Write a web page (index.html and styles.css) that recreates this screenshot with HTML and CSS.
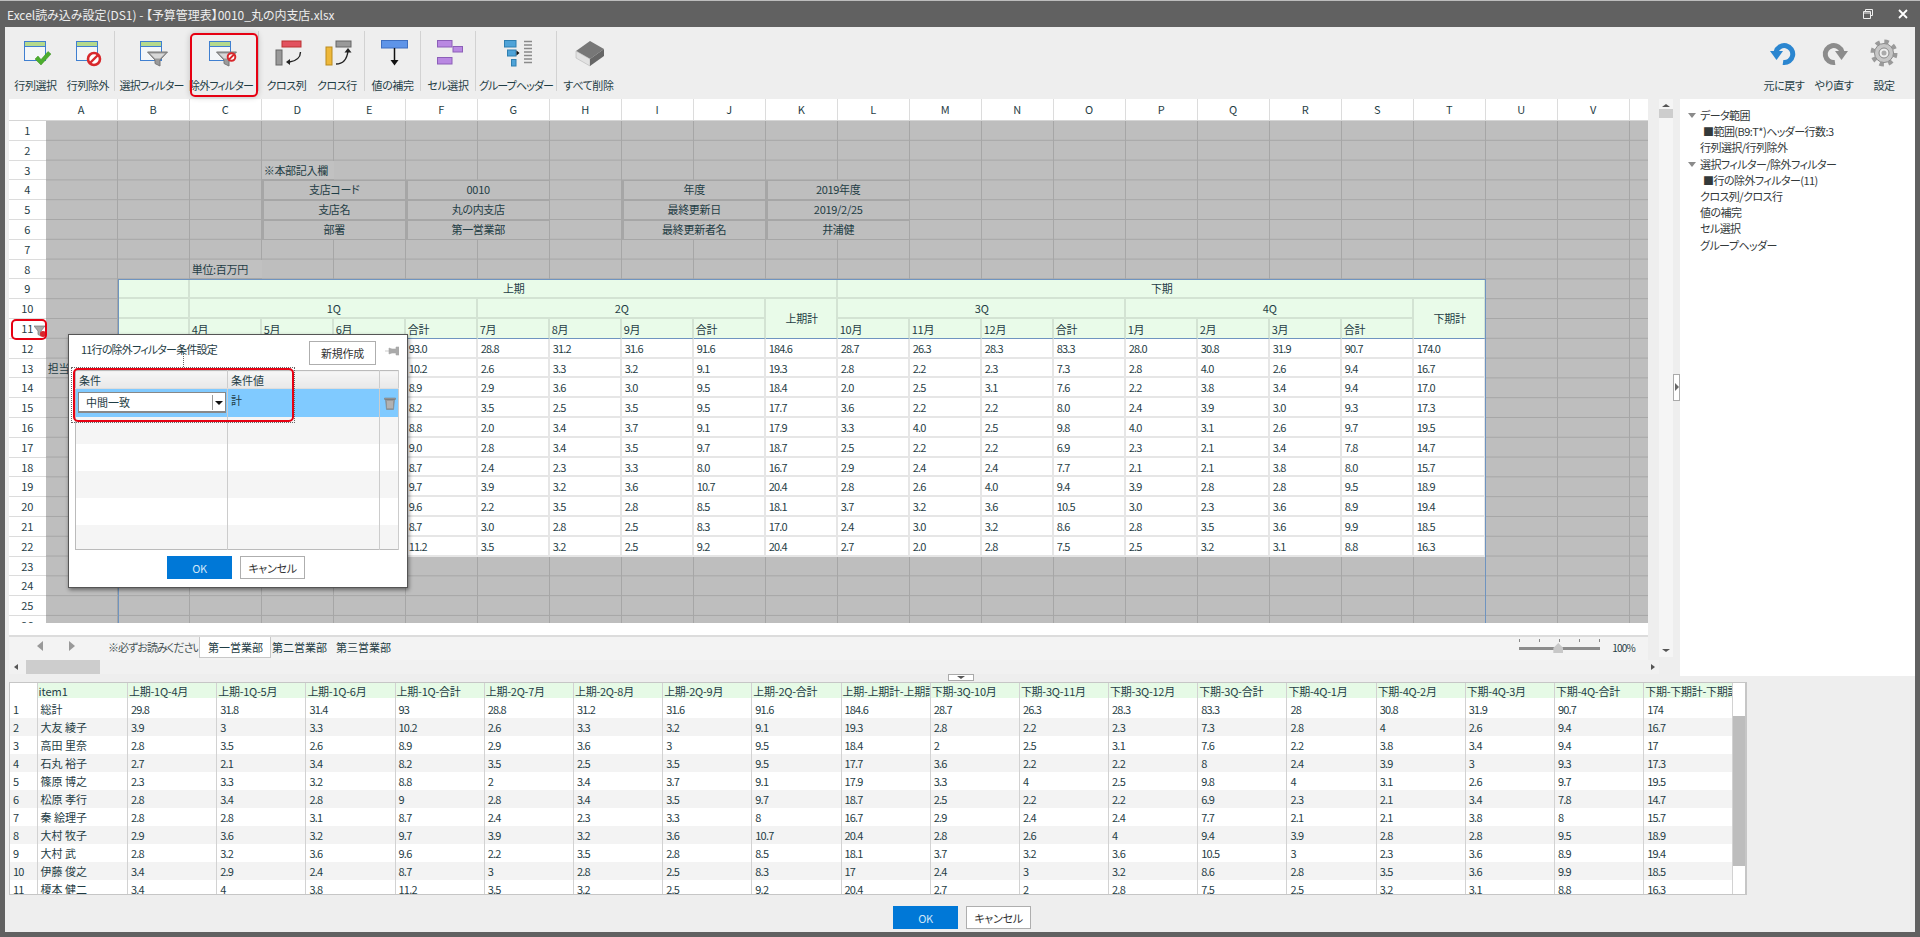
FILE: index.html
```html
<!DOCTYPE html>
<html lang="ja">
<head>
<meta charset="utf-8">
<title>Excel読み込み設定</title>
<link rel="stylesheet" href="styles.css">
</head>
<body>
<svg class="defs" width="0" height="0">
  <symbol id="sh" viewBox="0 0 32 28"><rect x="4.500" y="2.500" width="21" height="19" fill="#f4f6f8" stroke="#3f7fd0"/><rect x="5" y="3" width="20" height="4" fill="#b5d98c"/><path d="M5 7.500h20" stroke="#3f7fd0"/></symbol>
  <symbol id="fn" viewBox="0 0 32 28"><path d="M11.500 13h20l-7.500 8v6l-5-2.500v-3.500z" fill="#9a9a9a" stroke="#777"/><path d="M14 14.500h15l-5 5h-5z" fill="#d8d8d8"/></symbol>
</svg>
<div class="app">
  <header class="titlebar">
    <span class="title">Excel読み込み設定(DS1) - 【予算管理表】0010_丸の内支店.xlsx</span>
    <svg class="win-restore" width="10" height="10" viewBox="0 0 10 10"><path d="M2.500 2.500v-2h7v6h-2M.5 2.500h7v7h-7z M.5 4h7" fill="none" stroke="#eee"/></svg>
    <svg class="win-close" width="10" height="10" viewBox="0 0 10 10"><path d="M1 1l8 8M9 1l-8 8" stroke="#fff" stroke-width="1.800"/></svg>
  </header>

  <nav class="toolbar">
    <div class="tb w53"><svg width="32" height="28"><use href="#sh"/><path d="M15 20l3-3 3 3.500 7-8 3 2.500-10 11z" fill="#4cae2e" stroke="#3c8f22" stroke-width=".5"/></svg><span>行列選択</span></div>
    <div class="tb w52"><svg width="32" height="28"><use href="#sh"/><circle cx="22" cy="20" r="6" fill="#fff" stroke="#d8282c" stroke-width="2.600"/><path d="M18 24l8-8" stroke="#d8282c" stroke-width="2.400"/></svg><span>行列除外</span></div>
    <i class="sep"></i>
    <div class="tb w73"><svg width="32" height="28"><use href="#sh"/><use href="#fn"/></svg><span class="kana">選択フィルター</span></div>
    <div class="tb w66 mr4"><svg width="32" height="28"><use href="#sh"/><use href="#fn"/><circle cx="26.500" cy="18" r="3.800" fill="#fff" stroke="#d8282c" stroke-width="2"/><path d="M24 20.500l5-5" stroke="#d8282c" stroke-width="1.800"/></svg><span class="kana">除外フィルター</span></div>
    <i class="sep"></i>
    <div class="tb w55"><svg width="32" height="28"><rect x="11" y="2" width="19" height="6" fill="#e2525f" stroke="#b33"/><rect x="5" y="11" width="6" height="15" fill="#999" stroke="#666"/><path d="M29.500 13c0 5-4 9-11 10" fill="none" stroke="#222" stroke-width="1.400"/><path d="M15 23l4-3v6z" fill="#222"/></svg><span>クロス列</span></div>
    <div class="tb w46 mr4"><svg width="32" height="28"><rect x="15" y="2" width="15" height="6" fill="#999" stroke="#666"/><rect x="5" y="8" width="6" height="18" fill="#eeb83a" stroke="#b98a1c"/><path d="M15 25c7 0 11-5 12-13" fill="none" stroke="#222" stroke-width="1.400"/><path d="M27 9l3.500 4.500h-7z" fill="#222"/></svg><span>クロス行</span></div>
    <i class="sep"></i>
    <div class="tb w55"><svg width="32" height="28"><rect x="4.500" y="1.500" width="26" height="7.500" fill="#5e94e8" stroke="#3f6fc0"/><path d="M17.500 9v14" stroke="#111" stroke-width="1.500"/><path d="M13.500 21h8l-4 5.500z" fill="#111"/></svg><span>値の補完</span></div>
    <i class="sep"></i>
    <div class="tb w54"><svg width="32" height="28"><g fill="#b988e2" stroke="#8c5fb8"><rect x="5.500" y="1.500" width="14.500" height="6.500"/><rect x="21" y="7.500" width="9.500" height="5.500"/><rect x="5.500" y="18.500" width="14.500" height="6.500"/></g></svg><span>セル選択</span></div>
    <i class="sep"></i>
    <div class="tb w80"><svg width="32" height="28"><g fill="#4fa3d8" stroke="#2f7fb0"><rect x="4.500" y="1.500" width="11.500" height="6.500"/><rect x="7.500" y="11" width="8.500" height="6"/><rect x="11.500" y="20.500" width="4.500" height="6.500"/></g><path d="M16.500 11.500l3 2.500-3 2.500z" fill="#111"/><path d="M24 2.500h8M24 6h8M24 9.500h8M24 13h8M24 16.500h8M24 20h8M24 23.500h8" stroke="#8a8a8a" stroke-width="1.500"/></svg><span class="kana">グループヘッダー</span></div>
    <i class="sep"></i>
    <div class="tb w63"><svg width="32" height="28"><path d="M3 12L17 2l14 8-14 10z" fill="#777"/><path d="M3 12l14 8v7L3 19z" fill="#e2e2e2" stroke="#aaa" stroke-width=".5"/><path d="M17 20l14-10v7L17 27z" fill="#666"/></svg><span>すべて削除</span></div>
    <div class="tb w50 push"><svg width="28" height="28"><path d="M13 23.500A8.500 8.500 0 1 0 6 13" fill="none" stroke="#2b86d0" stroke-width="5"/><path d="M0 12h13l-6.500 9z" fill="#2b86d0"/></svg><span>元に戻す</span></div>
    <div class="tb w50"><svg width="28" height="28"><path d="M15 23.500A8.500 8.500 0 1 1 22 13" fill="none" stroke="#8c8c8c" stroke-width="5"/><path d="M28 12H15l6.500 9z" fill="#8c8c8c"/></svg><span>やり直す</span></div>
    <div class="tb w50"><svg width="28" height="28" viewBox="0 0 28 28"><circle cx="14" cy="14" r="11.500" fill="none" stroke="#9a9a9a" stroke-width="4" stroke-dasharray="4.500 4.530"/><circle cx="14" cy="14" r="9.500" fill="#c6c6c6" stroke="#8a8a8a"/><circle cx="14" cy="14" r="5" fill="#eee" stroke="#8a8a8a"/><circle cx="14" cy="14" r="2.500" fill="#aaa"/></svg><span>設定</span></div>
  </nav>

  <main class="main">
    <div class="sheet-col">
      <section class="sheet">
        <div class="col-heads">
          <span class="corner"></span>
          <span>A</span><span>B</span><span>C</span><span>D</span><span>E</span><span>F</span><span>G</span><span>H</span><span>I</span><span>J</span><span>K</span><span>L</span><span>M</span><span>N</span><span>O</span><span>P</span><span>Q</span><span>R</span><span>S</span><span>T</span><span>U</span><span>V</span><span></span>
        </div>
        <div class="sheet-body">
          <div class="row-heads">
            <span>1</span><span>2</span><span>3</span><span>4</span><span>5</span><span>6</span><span>7</span><span>8</span><span>9</span><span>10</span><span>11</span><span>12</span><span>13</span><span>14</span><span>15</span><span>16</span><span>17</span><span>18</span><span>19</span><span>20</span><span>21</span><span>22</span><span>23</span><span>24</span><span>25</span><span>26</span>
          </div>
          <div class="cells">
            <span class="cell plain r3 c4">※本部記入欄</span>
            <span class="cell r4 c4 s2">支店コード</span><span class="cell r4 c6 s2">0010</span><span class="cell r4 c9 s2">年度</span><span class="cell r4 c11 s2">2019年度</span>
            <span class="cell r5 c4 s2">支店名</span><span class="cell r5 c6 s2">丸の内支店</span><span class="cell r5 c9 s2">最終更新日</span><span class="cell r5 c11 s2">2019/2/25</span>
            <span class="cell r6 c4 s2">部署</span><span class="cell r6 c6 s2">第一営業部</span><span class="cell r6 c9 s2">最終更新者名</span><span class="cell r6 c11 s2">井浦健</span>
            <span class="cell plain r8 c3">単位:百万円</span>
            <span class="cell plain r13 c1">担当者</span>
            <div class="t">
              <span class="g"></span><span class="g ce s9">上期</span><span class="g ce s9">下期</span>
              <span class="g"></span><span class="g ce s4">1Q</span><span class="g ce s4">2Q</span><span class="g ce rs2">上期計</span><span class="g ce s4">3Q</span><span class="g ce s4">4Q</span><span class="g ce rs2">下期計</span>
              <span class="g hb"></span><span class="g hb">4月</span><span class="g hb">5月</span><span class="g hb">6月</span><span class="g hb">合計</span><span class="g hb">7月</span><span class="g hb">8月</span><span class="g hb">9月</span><span class="g hb">合計</span><span class="g hb">10月</span><span class="g hb">11月</span><span class="g hb">12月</span><span class="g hb">合計</span><span class="g hb">1月</span><span class="g hb">2月</span><span class="g hb">3月</span><span class="g hb">合計</span>
              <span></span><span>29.8</span><span>31.8</span><span>31.4</span><span>93.0</span><span>28.8</span><span>31.2</span><span>31.6</span><span>91.6</span><span>184.6</span><span>28.7</span><span>26.3</span><span>28.3</span><span>83.3</span><span>28.0</span><span>30.8</span><span>31.9</span><span>90.7</span><span>174.0</span>
              <span></span><span>3.9</span><span>3.0</span><span>3.3</span><span>10.2</span><span>2.6</span><span>3.3</span><span>3.2</span><span>9.1</span><span>19.3</span><span>2.8</span><span>2.2</span><span>2.3</span><span>7.3</span><span>2.8</span><span>4.0</span><span>2.6</span><span>9.4</span><span>16.7</span>
              <span></span><span>2.8</span><span>3.5</span><span>2.6</span><span>8.9</span><span>2.9</span><span>3.6</span><span>3.0</span><span>9.5</span><span>18.4</span><span>2.0</span><span>2.5</span><span>3.1</span><span>7.6</span><span>2.2</span><span>3.8</span><span>3.4</span><span>9.4</span><span>17.0</span>
              <span></span><span>2.7</span><span>2.1</span><span>3.4</span><span>8.2</span><span>3.5</span><span>2.5</span><span>3.5</span><span>9.5</span><span>17.7</span><span>3.6</span><span>2.2</span><span>2.2</span><span>8.0</span><span>2.4</span><span>3.9</span><span>3.0</span><span>9.3</span><span>17.3</span>
              <span></span><span>2.3</span><span>3.3</span><span>3.2</span><span>8.8</span><span>2.0</span><span>3.4</span><span>3.7</span><span>9.1</span><span>17.9</span><span>3.3</span><span>4.0</span><span>2.5</span><span>9.8</span><span>4.0</span><span>3.1</span><span>2.6</span><span>9.7</span><span>19.5</span>
              <span></span><span>2.8</span><span>3.4</span><span>2.8</span><span>9.0</span><span>2.8</span><span>3.4</span><span>3.5</span><span>9.7</span><span>18.7</span><span>2.5</span><span>2.2</span><span>2.2</span><span>6.9</span><span>2.3</span><span>2.1</span><span>3.4</span><span>7.8</span><span>14.7</span>
              <span></span><span>2.8</span><span>2.8</span><span>3.1</span><span>8.7</span><span>2.4</span><span>2.3</span><span>3.3</span><span>8.0</span><span>16.7</span><span>2.9</span><span>2.4</span><span>2.4</span><span>7.7</span><span>2.1</span><span>2.1</span><span>3.8</span><span>8.0</span><span>15.7</span>
              <span></span><span>2.9</span><span>3.6</span><span>3.2</span><span>9.7</span><span>3.9</span><span>3.2</span><span>3.6</span><span>10.7</span><span>20.4</span><span>2.8</span><span>2.6</span><span>4.0</span><span>9.4</span><span>3.9</span><span>2.8</span><span>2.8</span><span>9.5</span><span>18.9</span>
              <span></span><span>2.8</span><span>3.2</span><span>3.6</span><span>9.6</span><span>2.2</span><span>3.5</span><span>2.8</span><span>8.5</span><span>18.1</span><span>3.7</span><span>3.2</span><span>3.6</span><span>10.5</span><span>3.0</span><span>2.3</span><span>3.6</span><span>8.9</span><span>19.4</span>
              <span></span><span>3.4</span><span>2.9</span><span>2.4</span><span>8.7</span><span>3.0</span><span>2.8</span><span>2.5</span><span>8.3</span><span>17.0</span><span>2.4</span><span>3.0</span><span>3.2</span><span>8.6</span><span>2.8</span><span>3.5</span><span>3.6</span><span>9.9</span><span>18.5</span>
              <span></span><span>3.4</span><span>4.0</span><span>3.8</span><span>11.2</span><span>3.5</span><span>3.2</span><span>2.5</span><span>9.2</span><span>20.4</span><span>2.7</span><span>2.0</span><span>2.8</span><span>7.5</span><span>2.5</span><span>3.2</span><span>3.1</span><span>8.8</span><span>16.3</span>
            </div>
            <div class="range"></div>
          </div>
        </div>
      </section>
      <div class="tabs">
        <span class="tab-arrow left"></span><span class="tab-arrow right"></span>
        <span class="tab first">※必ずお読みください</span><span class="tab active">第一営業部</span><span class="tab">第二営業部</span><span class="tab">第三営業部</span>
        <div class="zoom">
          <div class="slider"><i class="ticks"></i><i class="track"></i><i class="thumb"></i></div>
          <span>100%</span>
        </div>
      </div>
      <div class="hscroll"><span class="arr-l"></span><span class="hthumb"></span><span class="arr-r"></span></div>
    </div>
    <div class="vscroll"><span class="arr-u"></span><span class="vthumb"></span><span class="arr-d"></span></div>
    <div class="split"><span class="split-handle"></span></div>
    <aside class="tree">
      <div class="node top">データ範囲</div>
      <div class="node sub">■範囲(B9:T*)ヘッダー行数:3</div>
      <div class="node">行列選択/行列除外</div>
      <div class="node top">選択フィルター/除外フィルター</div>
      <div class="node sub">■行の除外フィルター(11)</div>
      <div class="node">クロス列/クロス行</div>
      <div class="node">値の補完</div>
      <div class="node">セル選択</div>
      <div class="node">グループヘッダー</div>
    </aside>
  </main>

  <section class="lower">
    <span class="lower-handle"></span>
    <div class="dg">
      <table class="dt">
        <thead><tr><th></th><th>item1</th><th>上期-1Q-4月</th><th>上期-1Q-5月</th><th>上期-1Q-6月</th><th>上期-1Q-合計</th><th>上期-2Q-7月</th><th>上期-2Q-8月</th><th>上期-2Q-9月</th><th>上期-2Q-合計</th><th>上期-上期計-上期計</th><th>下期-3Q-10月</th><th>下期-3Q-11月</th><th>下期-3Q-12月</th><th>下期-3Q-合計</th><th>下期-4Q-1月</th><th>下期-4Q-2月</th><th>下期-4Q-3月</th><th>下期-4Q-合計</th><th>下期-下期計-下期計</th></tr></thead>
        <tbody>
          <tr><td>1<td>総計<td>29.8<td>31.8<td>31.4<td>93<td>28.8<td>31.2<td>31.6<td>91.6<td>184.6<td>28.7<td>26.3<td>28.3<td>83.3<td>28<td>30.8<td>31.9<td>90.7<td>174</tr>
          <tr><td>2<td>大友 綾子<td>3.9<td>3<td>3.3<td>10.2<td>2.6<td>3.3<td>3.2<td>9.1<td>19.3<td>2.8<td>2.2<td>2.3<td>7.3<td>2.8<td>4<td>2.6<td>9.4<td>16.7</tr>
          <tr><td>3<td>高田 里奈<td>2.8<td>3.5<td>2.6<td>8.9<td>2.9<td>3.6<td>3<td>9.5<td>18.4<td>2<td>2.5<td>3.1<td>7.6<td>2.2<td>3.8<td>3.4<td>9.4<td>17</tr>
          <tr><td>4<td>石丸 裕子<td>2.7<td>2.1<td>3.4<td>8.2<td>3.5<td>2.5<td>3.5<td>9.5<td>17.7<td>3.6<td>2.2<td>2.2<td>8<td>2.4<td>3.9<td>3<td>9.3<td>17.3</tr>
          <tr><td>5<td>篠原 博之<td>2.3<td>3.3<td>3.2<td>8.8<td>2<td>3.4<td>3.7<td>9.1<td>17.9<td>3.3<td>4<td>2.5<td>9.8<td>4<td>3.1<td>2.6<td>9.7<td>19.5</tr>
          <tr><td>6<td>松原 孝行<td>2.8<td>3.4<td>2.8<td>9<td>2.8<td>3.4<td>3.5<td>9.7<td>18.7<td>2.5<td>2.2<td>2.2<td>6.9<td>2.3<td>2.1<td>3.4<td>7.8<td>14.7</tr>
          <tr><td>7<td>秦 絵理子<td>2.8<td>2.8<td>3.1<td>8.7<td>2.4<td>2.3<td>3.3<td>8<td>16.7<td>2.9<td>2.4<td>2.4<td>7.7<td>2.1<td>2.1<td>3.8<td>8<td>15.7</tr>
          <tr><td>8<td>大村 牧子<td>2.9<td>3.6<td>3.2<td>9.7<td>3.9<td>3.2<td>3.6<td>10.7<td>20.4<td>2.8<td>2.6<td>4<td>9.4<td>3.9<td>2.8<td>2.8<td>9.5<td>18.9</tr>
          <tr><td>9<td>大村 武<td>2.8<td>3.2<td>3.6<td>9.6<td>2.2<td>3.5<td>2.8<td>8.5<td>18.1<td>3.7<td>3.2<td>3.6<td>10.5<td>3<td>2.3<td>3.6<td>8.9<td>19.4</tr>
          <tr><td>10<td>伊藤 俊之<td>3.4<td>2.9<td>2.4<td>8.7<td>3<td>2.8<td>2.5<td>8.3<td>17<td>2.4<td>3<td>3.2<td>8.6<td>2.8<td>3.5<td>3.6<td>9.9<td>18.5</tr>
          <tr><td>11<td>榎本 健二<td>3.4<td>4<td>3.8<td>11.2<td>3.5<td>3.2<td>2.5<td>9.2<td>20.4<td>2.7<td>2<td>2.8<td>7.5<td>2.5<td>3.2<td>3.1<td>8.8<td>16.3</tr>
        </tbody>
      </table>
      <div class="dg-scroll"><span class="dg-thumb"></span></div>
    </div>
    <div class="actions">
      <button class="btn primary">OK</button>
      <button class="btn">キャンセル</button>
    </div>
  </section>

  <div class="mark mark-tool"></div>
  <div class="mark mark-row"></div>
  <svg class="row-filter" width="13" height="13" viewBox="0 0 13 13"><path d="M0 1h11L7 6v5L4 9.500V6z" fill="#aaa" stroke="#777" stroke-width=".7"/><circle cx="9" cy="9" r="3" fill="#d8282c"/></svg>

  <div class="dialog">
    <div class="dlg-head">
      <span class="dlg-title">11行の除外フィルター条件設定</span>
      <button class="btn dlg-new">新規作成</button>
      <svg class="pin" width="14" height="10" viewBox="0 0 14 10"><path d="M0 5h4M4 2l3 1h4V1h3v8h-3V7H7L4 8z" fill="#aaa" stroke="#aaa" stroke-width=".6"/></svg>
    </div>
    <table class="ct">
      <thead><tr><th>条件</th><th>条件値</th><th></th></tr></thead>
      <tbody>
        <tr class="sel">
          <td><div class="combo"><span>中間一致</span><i class="combo-btn"></i></div></td>
          <td>計</td>
          <td><svg class="trash" width="12" height="13" viewBox="0 0 12 13"><path d="M.5 1h11v1.500h-11zM1.500 2.500h9l-1 10h-7z" fill="#9a9a9a" stroke="#777" stroke-width=".5"/><path d="M4 4v7M6 4v7M8 4v7" stroke="#c8c8c8"/></svg></td>
        </tr>
        <tr><td></td><td></td><td></td></tr>
        <tr><td></td><td></td><td></td></tr>
        <tr><td></td><td></td><td></td></tr>
        <tr><td></td><td></td><td></td></tr>
        <tr class="last"><td></td><td></td><td></td></tr>
      </tbody>
    </table>
    <div class="dlg-actions">
      <button class="btn primary">OK</button>
      <button class="btn">キャンセル</button>
    </div>
    <div class="dots"></div>
    <div class="dots-line"></div>
    <div class="mark mark-cond"></div>
  </div>
</div>
</body>
</html>
```

FILE: styles.css
```css
* { box-sizing: border-box; }
html, body { margin: 0; height: 100%; overflow: hidden; }
body {
  font-family: "Noto Sans CJK JP", "Noto Sans", sans-serif;
  font-feature-settings: "palt";
  font-size: 11px;
  color: #1f3d45;
  background: #616161;
}
.defs { position: absolute; }
.app {
  position: relative;
  width: 1920px;
  height: 937px;
  padding: 1px 5px 5px;
  background: #616161;
  display: flex;
  flex-direction: column;
  box-shadow: inset 0 1px 0 #bdbdbd;
}

/* title bar */
.titlebar { height: 26px; display: flex; align-items: center; color: #eee; padding-left: 2px; flex: none; }
.title { font-size: 12px; letter-spacing: -.03px; }
.win-restore { margin-left: auto; margin-right: 25px; }
.win-close { margin-right: 7px; }

/* toolbar */
.toolbar { height: 72px; flex: none; background: #eee; display: flex; padding: 0 6px 0 4px; }
.tb { height: 72px; display: flex; flex-direction: column; align-items: center; padding-top: 12px; flex: none; white-space: nowrap; font-size: 11px; letter-spacing: -.4px; }
.tb svg { flex: none; display: block; }
.tb span { margin-top: 10px; line-height: 16px; }
.tb .kana { letter-spacing: -.9px; }
.w46 { width: 46px; } .w50 { width: 50px; } .w52 { width: 52px; } .w53 { width: 53px; } .w54 { width: 54px; }
.w55 { width: 55px; } .w63 { width: 63px; } .w66 { width: 66px; } .w73 { width: 73px; } .w80 { width: 80px; }
.mr4 { margin-right: 4px; }
.push { margin-left: auto; }
.sep { width: 1px; height: 60px; margin: 4px 0 0; background: #d2d2d2; flex: none; }

/* main area */
.main { height: 577px; flex: none; display: flex; background: #eee; padding-left: 4px; }
.sheet-col { width: 1650px; flex: none; display: flex; flex-direction: column; }
.sheet { width: 1639px; height: 536px; background: #fff; overflow: hidden; flex: none; }
.col-heads { height: 22px; display: flex; border-bottom: 1px solid #d5d5d5; }
.col-heads span { width: 72px; flex: none; text-align: center; line-height: 21px; border-right: 1px solid #dcdcdc; }
.col-heads .corner { width: 36.700px; border-right: 0; }
.sheet-body { display: flex; height: 502px; overflow: hidden; }
.row-heads { width: 36.700px; flex: none; display: flex; flex-direction: column; }
.row-heads span { height: 19.800px; flex: none; text-align: center; line-height: 19px; border-bottom: 1px solid #dcdcdc; }
.cells {
  position: relative;
  flex: none;
  width: 1656px;
  display: grid;
  grid-template-columns: repeat(23, 72px);
  grid-auto-rows: 19.800px;
  background-color: #bebebe;
  background-image: linear-gradient(to left, #a6a6a6 1px, transparent 1px), linear-gradient(to top, #a6a6a6 1px, transparent 1px);
  background-size: 72px 19.800px;
}
.cell { line-height: 17px; text-align: center; border: 1px solid #a6a6a6; border-left-width: 2px; background: #bebebe; white-space: nowrap; letter-spacing: -.3px; }
.cell.plain { border: 0; background: #c1c1c1; text-align: left; padding-left: 2px; line-height: 19px; border-bottom: 1px solid #a6a6a6; letter-spacing: -.3px; }
.r3 { grid-row: 3; } .r4 { grid-row: 4; } .r5 { grid-row: 5; } .r6 { grid-row: 6; } .r8 { grid-row: 8; } .r13 { grid-row: 13; }
.c1 { grid-column-start: 1; } .c3 { grid-column-start: 3; } .c4 { grid-column-start: 4; } .c6 { grid-column-start: 6; } .c9 { grid-column-start: 9; } .c11 { grid-column-start: 11; }
.cell.s2 { grid-column-end: span 2; }
.t {
  grid-column: 2 / span 19;
  grid-row: 9 / span 14;
  display: grid;
  grid-template-columns: repeat(19, 72px);
  grid-auto-rows: 19.800px;
  background: #fff;
}
.t span { line-height: 18px; padding-left: 3px; border-right: 2px solid #e6e6e6; border-bottom: 2px solid #e6e6e6; white-space: nowrap; letter-spacing: -.8px; }
.t .g { background: #e9fbe9; border-color: #d3e3d3; padding-left: 2px; line-height: 20px; letter-spacing: -.2px; }
.t .ce { text-align: center; display: flex; align-items: center; justify-content: center; }
.t .s9 { grid-column-end: span 9; }
.t .s4 { grid-column-end: span 4; }
.t .rs2 { grid-row-end: span 2; }
.t .hb { border-bottom: 1px solid #6f94c0; }
.t .rs2.ce { border-bottom: 1px solid #6f94c0; }
.range { grid-column: 2 / span 19; grid-row: 9 / span 18; border: 1px solid #6f94c0; z-index: 1; pointer-events: none; }

/* tabs */
.tabs { position: relative; width: 1639px; height: 25px; flex: none; display: flex; align-items: flex-start; background: #f3f3f3; border-top: 2px solid #dcdcdc; padding-left: 99px; }
.tab { line-height: 21px; padding: 0 5px; white-space: nowrap; font-size: 11px; }
.tab.first { padding: 0 2px 0 0; width: 91px; color: #4a5658; letter-spacing: -.95px; }
.tab.active { background: #fff; border: 1px solid #c8c8c8; border-top: 0; height: 21px; width: 72px; padding: 0 0 0 8px; }
.tab + .tab + .tab { padding: 0 10px 0 1px; width: 64px; }
.tab-arrow { position: absolute; top: 4px; width: 0; height: 0; border-top: 5px solid transparent; border-bottom: 5px solid transparent; }
.tab-arrow.left { left: 28px; border-right: 6px solid #999; }
.tab-arrow.right { left: 60px; border-left: 6px solid #999; }
.zoom { margin-left: auto; display: flex; align-items: center; height: 20px; padding-right: 13px; font-size: 10px; letter-spacing: -.8px; }
.slider { position: relative; width: 81px; height: 20px; margin-right: 12px; }
.ticks { position: absolute; left: 0; top: 2px; width: 81px; height: 3px; background: repeating-linear-gradient(to right, #888 0 1px, transparent 1px 20px); }
.track { position: absolute; left: 0; top: 10px; width: 81px; height: 3px; background: #8c8c8c; }
.thumb { position: absolute; left: 34px; top: 6px; width: 10px; height: 10px; background: #c8c8c8; clip-path: polygon(50% 0, 100% 50%, 100% 100%, 0 100%, 0 50%); }

.hscroll { width: 1650px; height: 14px; flex: none; display: flex; align-items: center; background: #f1f1f1; }
.hthumb { width: 74px; height: 14px; background: #cdcdcd; margin-left: 8px; }
.arr-l { margin-left: 5px; border: 3px solid transparent; border-left: 0; border-right: 4px solid #555; width: 0; height: 0; }
.arr-r { margin-left: auto; margin-right: 4px; border: 3px solid transparent; border-right: 0; border-left: 4px solid #555; width: 0; height: 0; }

.vscroll { width: 14px; height: 558px; flex: none; position: relative; background: #f5f5f5; display: flex; flex-direction: column; align-items: center; }
.arr-u { margin-top: 5px; border: 4px solid transparent; border-top: 0; border-bottom: 3px solid #555; width: 0; height: 0; }
.vthumb { width: 14px; height: 9px; margin-top: 2px; background: #cdcdcd; }
.arr-d { margin-top: auto; margin-bottom: 5px; border: 4px solid transparent; border-bottom: 0; border-top: 3px solid #555; width: 0; height: 0; }

.split { width: 7px; flex: none; position: relative; }
.split-handle { position: absolute; left: 0; top: 275px; width: 7px; height: 27px; background: #fff; border: 1px solid #aaa; }
.split-handle::after { content: ""; position: absolute; left: 1px; top: 8px; border: 4px solid transparent; border-left: 4px solid #666; border-right: 0; }

.tree { flex: 1; background: #fff; padding: 8px 0 0 8px; }
.node { height: 16.200px; line-height: 16px; padding-left: 12px; white-space: nowrap; position: relative; letter-spacing: -.55px; color: #33393a; }
.node.sub { padding-left: 15px; }
.node.top::before { content: ""; position: absolute; left: 0; top: 6px; border: 4px solid transparent; border-top: 5px solid #8a8a8a; border-bottom: 0; }

/* lower */
.lower { position: relative; flex: 1; background: #eee; padding: 6px 0 0 4px; display: flex; flex-direction: column; }
.lower-handle { position: absolute; left: 943px; top: -2px; width: 26px; height: 7px; background: #fff; border: 1px solid #aaa; }
.lower-handle::after { content: ""; position: absolute; left: 8px; top: 1px; border: 4px solid transparent; border-top: 3px solid #555; border-bottom: 0; }
.dg { width: 1738px; height: 213px; flex: none; display: flex; border: 1px solid #c6c6c6; border-width: 1px 2px 1px 1px; overflow: hidden; background: #fff; }
.dt { table-layout: fixed; border-collapse: collapse; width: 1723px; flex: none; align-self: flex-start; }
.dt th, .dt td { padding: 0 0 0 3px; overflow: hidden; white-space: nowrap; width: 89.200px; text-align: left; font-weight: 400; border-right: 1px solid #d2d2d2; letter-spacing: -.8px; }
.dt th:first-child, .dt td:first-child { width: 27px; }
.dt th:nth-child(2), .dt td:nth-child(2) { width: 90.500px; letter-spacing: 0; }
.dt th { height: 15px; background: #e6fae6; line-height: 14px; padding-left: 1px; letter-spacing: -.25px; }
.dt th:first-child { background: #fff; }
.dt td { height: 18px; line-height: 16px; }
.dt tbody tr:first-child td { height: 20px; padding-top: 1px; }
.dt tbody tr:nth-child(even) td { background: #f3f3f3; }
.dg-scroll { width: 14px; flex: none; padding-top: 33px; }
.dg-thumb { display: block; width: 14px; height: 150px; background: #bdbdbd; }
.actions { display: flex; justify-content: center; gap: 8px; margin-top: 11px; }
.btn { width: 65px; height: 23px; padding: 0; border: 1px solid #aeaeae; background: #fff; color: #333; font: inherit; font-size: 11px; font-feature-settings: "palt"; letter-spacing: -.3px; }
.btn.primary { background: #0078d7; border-color: #0078d7; color: #cfe6f7; }

/* highlights */
.mark { position: absolute; border: 2px solid #e60012; border-radius: 5px; pointer-events: none; z-index: 4; }
.mark-tool { left: 190px; top: 33px; width: 68px; height: 64px; box-shadow: 0 0 6px rgba(0,0,0,.2); }
.mark-row { left: 11px; top: 319px; width: 36px; height: 21px; }
.row-filter { position: absolute; left: 34px; top: 325px; }

/* dialog */
.dialog { position: absolute; z-index: 5; left: 68px; top: 334px; width: 340px; height: 254px; background: #fff; border: 1px solid #555; box-shadow: 1px 2px 4px rgba(0,0,0,.45); padding: 6px 7px 0 6px; display: flex; flex-direction: column; }
.dlg-head { height: 29px; flex: none; display: flex; align-items: flex-start; }
.dlg-title { margin: 1px 0 0 6px; line-height: 15px; letter-spacing: -.8px; white-space: nowrap; }
.dlg-new { margin-left: auto; width: 67px; height: 24px; }
.pin { margin: 5px 1px 0 9px; }
.ct { table-layout: fixed; border-collapse: collapse; width: 324px; border: 1px solid #bbb; flex: none; }
.ct th { height: 18px; font-weight: 400; text-align: left; padding: 0 0 0 3px; background: linear-gradient(#f6f6f6, #e8e8e8); border-right: 1px solid #ccc; border-bottom: 1px solid #ddd; }
.ct th:nth-child(1) { width: 152px; }
.ct th:nth-child(2) { width: 152px; }
.ct td { height: 27px; border-right: 1px solid #ccc; padding: 0; vertical-align: top; }
.ct tbody tr:nth-child(even) td { background: #f5f5f5; }
.ct tbody tr.sel td { background: #80caff; height: 28px; padding: 3px 0 0 3px; }
.ct tr.last td { height: 25px; }
.combo { width: 148px; height: 21px; margin: 0 0 0 -1px; background: #fff; border: 1px solid #888; border-width: 1px 1px 2px 1px; display: flex; align-items: center; padding-left: 7px; position: relative; }
.combo-btn { position: absolute; right: 0; top: 2px; width: 13px; height: 15px; border-left: 1px solid #999; }
.combo-btn::after { content: ""; position: absolute; left: 2px; top: 6px; border: 4px solid transparent; border-top: 4px solid #111; border-bottom: 0; }
.trash { margin: 5px 0 0 1px; display: block; }
.dlg-actions { display: flex; justify-content: center; gap: 8px; margin-top: 6px; padding-right: 3px; }
.dots { position: absolute; left: 2px; top: 32px; width: 224px; height: 56px; border: 1px dotted #666; }
.dots-line { position: absolute; left: 114px; top: 18px; height: 14px; border-left: 1px dotted #666; }
.mark-cond { left: 4px; top: 33px; width: 221px; height: 54px; }
```
